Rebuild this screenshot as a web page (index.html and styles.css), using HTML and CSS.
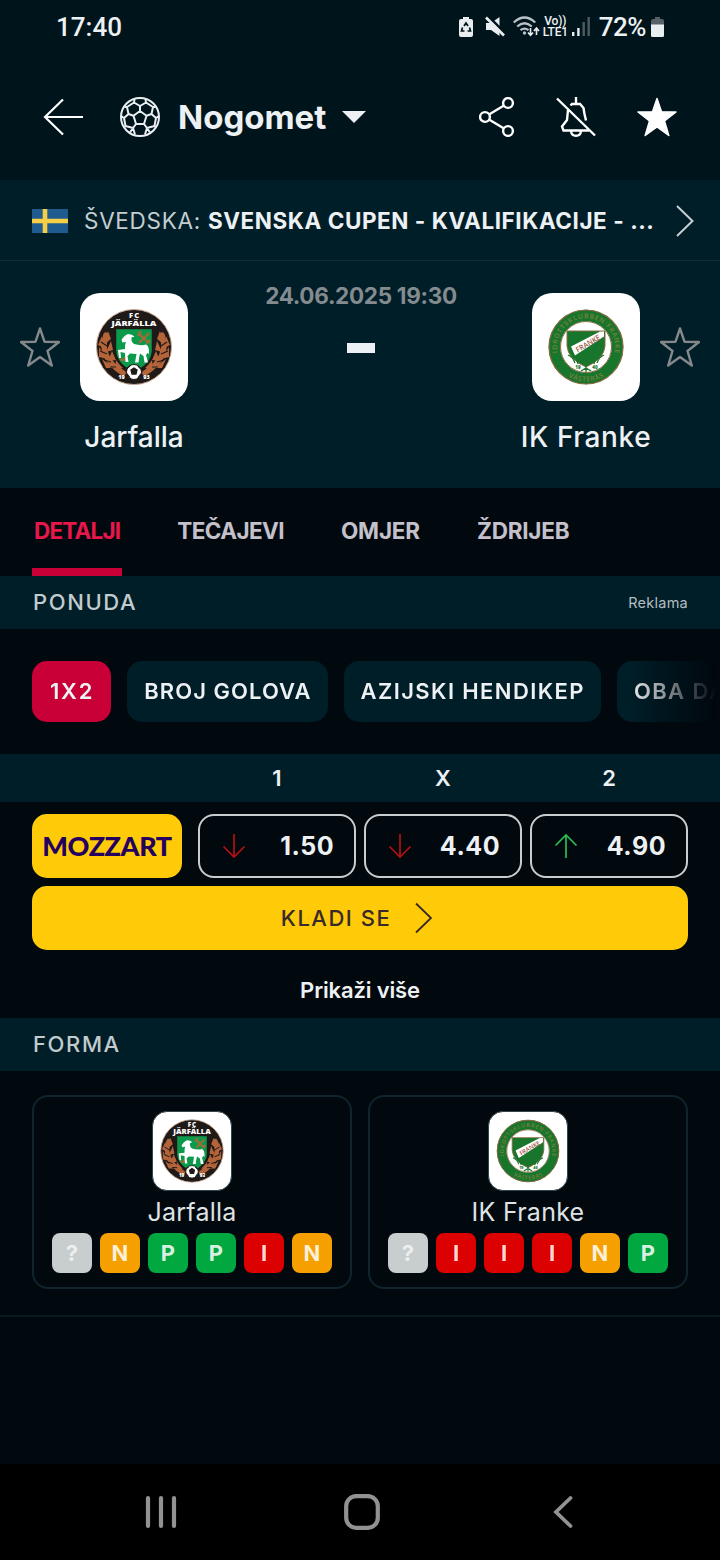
FILE: index.html
```html
<!DOCTYPE html>
<html lang="hr">
<head>
  <meta charset="UTF-8">
  <meta name="viewport" content="width=device-width, initial-scale=1.0">
  <title>Jarfalla - IK Franke</title>
  <link rel="stylesheet" href="styles.css">
</head>
<body>
  <!-- Shared icons and team crests -->
  <svg class="defs" width="0" height="0">
    <symbol id="star" viewBox="0 0 40 40">
      <path d="M20 1.500 L24.500 14.700 L39 15 L27.500 24 L31.800 38.500 L20 30 L8.200 38.500 L12.500 24 L1 15 L15.500 14.700 Z" stroke-linejoin="round"/>
    </symbol>
    <symbol id="arrow" viewBox="0 0 24 26">
      <path d="M12 1 V24 M1.500 13.500 L12 24 L22.500 13.500" fill="none" stroke="currentColor" stroke-width="1.700"/>
    </symbol>
    <symbol id="jarfalla" viewBox="0 0 108 108">
      <circle cx="54" cy="54" r="37.500" fill="#1f1a18" stroke="#c9a891" stroke-width="1"/>
      <g fill="none" stroke="#b5643a" stroke-width="5.500" stroke-linecap="round">
        <path d="M26 42 Q18 64 43 80"/>
        <path d="M82 42 Q90 64 65 80"/>
      </g>
      <g fill="#b5643a">
        <path d="M28 38 l3 8 l-5 4z M22 43 l-4 9 l6 3z M31 48 l2 9 l-7 2z M19 54 l0 10 l8 2z M32 58 l4 9 l-8 1z M22 66 l4 9 l8 0z M36 67 l7 8 l-8 2z"/>
        <path d="M80 38 l-3 8 l5 4z M86 43 l4 9 l-6 3z M77 48 l-2 9 l7 2z M89 54 l0 10 l-8 2z M76 58 l-4 9 l8 1z M86 66 l-4 9 l-8 0z M72 67 l-7 8 l8 2z"/>
      </g>
      <path d="M21 49l6 4M20 58l7 3M24 67l7 2M30 74l6 0M87 49l-6 4M88 58l-7 3M84 67l-7 2M78 74l-6 0" stroke="#1f1a18" stroke-width="1.200"/>
      <path d="M35 35 H73 V58 Q72 72 54 80 Q36 72 35 58 Z" fill="#0b9a4b" stroke="#1f1a18" stroke-width="2.500"/>
      <path d="M58 40 l11 10 M69 40 l-10 10 M61 38 l-3 5 M67 51 l3 -4" stroke="#a06b35" stroke-width="2.300"/>
      <path d="M48 61 l-5 7 M43 66 l-3 1" stroke="#a06b35" stroke-width="2"/>
      <path d="M41.500 47 Q44 42.500 48 41 Q52 41 54.500 43.500 L51.500 44.500 Q51 49 54 51 Q61 53 66 51.500 Q69.500 53 69 61 L67.500 60 L66 62 L68 69.500 H64.500 L63.500 63 L60 60.500 L59 65 L58.500 69.500 H55 L56.500 61 L50 60.500 L47.500 63 L48.500 69 H45.500 L45 60 L40.500 59 L41 65 H39 L38 57 L45 56 Q44.500 52 46 49 L42.500 49.500 Z" fill="#fff"/>
      <circle cx="54" cy="79" r="7.500" fill="#fff" stroke="#1f1a18" stroke-width="1"/>
      <path d="M51 77 l3 -2 l3 2 l-1 4 h-4z M47 75 l3 -2 M58 73 l3 3 M47 81 l3 4 M58 85 l3 -4" fill="#1f1a18" stroke="#1f1a18" stroke-width="1.300"/>
      <g fill="#fff" class="crest-text">
        <text x="54" y="25" font-size="7.500" textLength="10">FC</text>
        <text x="54" y="33.200" font-size="7.500" textLength="45" lengthAdjust="spacingAndGlyphs">JÄRFÄLLA</text>
        <text x="41.500" y="85.500" font-size="5.500">19</text>
        <text x="66.500" y="85.500" font-size="5.500">93</text>
      </g>
    </symbol>
    <symbol id="franke" viewBox="0 0 108 108">
      <circle cx="54" cy="54" r="31.500" fill="#fff" stroke="#18752c" stroke-width="11.500"/>
      <circle cx="54" cy="54" r="37" fill="none" stroke="#8a6b43" stroke-width="1.200"/>
      <circle cx="54" cy="54" r="25.500" fill="none" stroke="#8a6b43" stroke-width="1"/>
      <path id="ring-top" d="M26.200 62.500 A29 29 0 1 1 81.800 62.500" fill="none"/>
      <path id="ring-bottom" d="M27 75.500 A34.500 34.500 0 0 0 81 75.500" fill="none"/>
      <g class="crest-ring">
        <text font-size="6.600"><textPath href="#ring-top" textLength="102" startOffset="3">IDROTTSKLUBBEN·FRANKE</textPath></text>
        <text font-size="6.600"><textPath href="#ring-bottom" textLength="37" startOffset="12.500">VÄSTERÅS</textPath></text>
      </g>
      <path d="M35 38 H73 V53 Q72 66 54 74 Q36 66 35 53 Z" fill="#18752c" stroke="#8a6b43" stroke-width="1"/>
      <path d="M39 53.500 L68 38.500 L72 38.500 V43.500 L43 62.500 Z" fill="#fff"/>
      <path d="M36 62 q5 2 7 8 M40 62 q5 4 6 9 M72 62 q-5 2 -7 8 M68 62 q-5 4 -6 9 M54 72 v7 M49 78 l5 -3 l5 3" fill="none" stroke="#18752c" stroke-width="1.300"/>
      <g class="crest-text">
        <text class="banner" x="56" y="53.200" font-size="7.500" textLength="27" lengthAdjust="spacingAndGlyphs" fill="#a05a45" transform="rotate(-31 56 50.500)">FRANKE</text>
        <text x="46" y="76" font-size="4.500" fill="#18752c">19</text>
        <text x="63" y="76" font-size="4.500" fill="#18752c">40</text>
      </g>
    </symbol>
  </svg>

  <div class="screen">
    <div class="status-bar">
      <span class="clock">17:40</span>
      <div class="status-icons">
        <svg width="14" height="22" viewBox="0 0 14 22">
          <path d="M4 1 H10 V3 H12 Q14 3 14 5 V19 Q14 21 12 21 H2 Q0 21 0 19 V5 Q0 3 2 3 H4 Z" fill="#e8edef"/>
          <path d="M5 10 L7 7 L9 10 M10.500 11.500 L11.500 15 H8.500 M5.500 15 H2.500 L3.500 11.500" fill="none" stroke="#00141c" stroke-width="1.700"/>
        </svg>
        <svg class="mute" width="20" height="22" viewBox="0 0 20 22">
          <path d="M1 7 H6 L14.500 1 V20 L6 14 H1 Z" fill="#e8edef"/>
          <path d="M3 0 L20 17" stroke="#00141c" stroke-width="2.600"/>
          <path d="M1 1.500 L19 19.500" stroke="#e8edef" stroke-width="2.600"/>
        </svg>
        <svg class="wifi" width="27" height="22" viewBox="0 0 27 22">
          <g fill="none" stroke="#b9c2c6" stroke-width="2.300">
            <path d="M.8 6.500 Q11.500 -3.500 22.200 6.500"/>
            <path d="M4.200 10.500 Q11.500 4 18.800 10.500"/>
            <path d="M7.500 14.200 Q11.500 11 15.500 14.200"/>
          </g>
          <circle cx="11.500" cy="17" r="1.700" fill="#b9c2c6"/>
          <path d="M17.500 12 V19 M15 16.500 L17.500 19.300 L20 16.500 M23.500 19 V12 M21 15 L23.500 12 L26 15" fill="none" stroke="#e8edef" stroke-width="1.600"/>
        </svg>
        <div class="volte"><span>Vo))</span><span>LTE1</span></div>
        <svg class="signal" width="18" height="20" viewBox="0 0 18 20">
          <path d="M1.200 19 V15 M6.400 19 V11" stroke="#e8edef" stroke-width="2.400"/>
          <path d="M11.700 19 V5 M16.700 19 V0" stroke="#4d5a60" stroke-width="2.400"/>
        </svg>
        <span class="battery-level">72%</span>
        <svg width="13" height="22" viewBox="0 0 13 22">
          <path d="M4 1 H9 V3 H11 Q13 3 13 5 V9 H0 V5 Q0 3 2 3 H4 Z" fill="#566268"/>
          <path d="M0 8.500 H13 V19.500 Q13 21 11.500 21 H1.500 Q0 21 0 19.500 Z" fill="#e8edef"/>
        </svg>
      </div>
    </div>

    <header class="header">
      <svg class="back" width="42" height="40" viewBox="0 0 42 40">
        <path d="M40 20 H2 M20 2.500 L2 20 L20 37.500" fill="none" stroke="#fff" stroke-width="2.200"/>
      </svg>
      <svg class="ball" width="40" height="40" viewBox="0 0 40 40" fill="none" stroke="#e9eef0" stroke-width="2" stroke-linejoin="round">
        <circle cx="20" cy="20" r="19"/>
        <path d="M20 14 L26.500 18.700 L24 27 H16 L13.500 18.700 Z M20 14 V9 M26.500 18.700 L31.500 17 M24 27 L27 31 M16 27 L13 31 M13.500 18.700 L8.500 17"/>
        <path d="M20 9 L14 5.500 L14.500 2 M20 9 L26 5.500 L25.500 2 M14 5.500 L7 10 L8.500 17 L4 21 L5.500 29 L13 31 L15 37.500 M26 5.500 L33 10 L31.500 17 L36 21 L34.500 29 L27 31 L25 37.500 M7 10 L4.500 10 M33 10 L35.500 10 M4 21 L1 19 M36 21 L39 19 M5.500 29 L4.500 30 M34.500 29 L35.500 30 M13 31 L10 35.500 M27 31 L30 35.500"/>
      </svg>
      <h1>Nogomet</h1>
      <span class="caret"></span>
      <div class="actions">
        <svg width="36" height="40" viewBox="0 0 36 40" fill="none" stroke="#fff" stroke-width="2.400">
          <circle cx="6" cy="20" r="4.900"/>
          <circle cx="29" cy="6" r="4.900"/>
          <circle cx="29" cy="34" r="4.900"/>
          <path d="M10 17.500 L25 8.500 M10 22.500 L25 31.500"/>
        </svg>
        <svg width="40" height="40" viewBox="0 0 40 40" fill="none" stroke="#fff" stroke-width="2.400">
          <path d="M1 1.500 L39 38.500 M20 0 V7 M14.500 8.500 L16 7 H24 L27.500 11 L28.500 17 L30 23.500 M12 13 Q11.500 18 11 23 L6 29.500 L7.500 33.500 H33 M15 34 Q15.500 38.800 20 38.800 Q24.500 38.800 25 34"/>
        </svg>
        <svg class="star-full" width="40" height="40"><use href="#star"/></svg>
      </div>
    </header>

    <div class="league">
      <svg width="36" height="24" viewBox="0 0 36 24">
        <rect width="36" height="24" fill="#1f5b8f"/>
        <path d="M13 0 V24 M0 12 H36" stroke="#f7cf46" stroke-width="4.600"/>
      </svg>
      <p><span class="country">ŠVEDSKA: </span><span class="cup">SVENSKA CUPEN - KVALIFIKACIJE - ...</span></p>
      <svg class="league-next" width="18" height="32" viewBox="0 0 18 32">
        <path d="M1 1 L16.500 16 L1 31" fill="none" stroke="#c8cfd2" stroke-width="2"/>
      </svg>
    </div>

    <div class="match">
      <svg class="star-empty" width="40" height="40"><use href="#star"/></svg>
      <div class="team">
        <div class="team-logo"><svg width="108" height="108"><use href="#jarfalla"/></svg></div>
        <span class="team-name home">Jarfalla</span>
      </div>
      <div class="score">
        <span class="date">24.06.2025 19:30</span>
        <span class="dash"></span>
      </div>
      <div class="team">
        <div class="team-logo"><svg width="108" height="108"><use href="#franke"/></svg></div>
        <span class="team-name away">IK Franke</span>
      </div>
      <svg class="star-empty" width="40" height="40"><use href="#star"/></svg>
    </div>

    <nav class="tabs">
      <span class="tab active">DETALJI</span>
      <span class="tab odds">TEČAJEVI</span>
      <span class="tab">OMJER</span>
      <span class="tab">ŽDRIJEB</span>
    </nav>

    <div class="section-title"><h2>PONUDA</h2><span class="ad-label">Reklama</span></div>

    <div class="markets">
      <span class="chip selected">1X2</span>
      <span class="chip goals">BROJ GOLOVA</span>
      <span class="chip">AZIJSKI HENDIKEP</span>
      <span class="chip">OBA DAJU GOL</span>
    </div>

    <div class="odds-head"><span>1</span><span>X</span><span>2</span></div>

    <div class="offer">
      <div class="odds-row">
        <div class="bookmaker">MOZZART</div>
        <div class="odd down"><svg width="24" height="26"><use href="#arrow"/></svg><span>1.50</span></div>
        <div class="odd down"><svg width="24" height="26"><use href="#arrow"/></svg><span>4.40</span></div>
        <div class="odd up"><svg width="24" height="26"><use href="#arrow"/></svg><span>4.90</span></div>
      </div>
      <div class="bet-btn">
        <span>KLADI SE</span>
        <svg width="18" height="32" viewBox="0 0 18 32">
          <path d="M1 1.500 L16 16 L1 30.500" fill="none" stroke="#38292a" stroke-width="1.800"/>
        </svg>
      </div>
      <div class="more">Prikaži više</div>
    </div>

    <div class="section-title"><h2>FORMA</h2></div>

    <div class="form">
      <div class="form-card">
        <div class="form-logo"><svg width="90" height="90"><use href="#jarfalla"/></svg></div>
        <span class="form-name">Jarfalla</span>
        <div class="results">
          <span class="result unknown">?</span>
          <span class="result draw">N</span>
          <span class="result win">P</span>
          <span class="result win">P</span>
          <span class="result loss">I</span>
          <span class="result draw">N</span>
        </div>
      </div>
      <div class="form-card">
        <div class="form-logo"><svg width="90" height="90"><use href="#franke"/></svg></div>
        <span class="form-name">IK Franke</span>
        <div class="results">
          <span class="result unknown">?</span>
          <span class="result loss">I</span>
          <span class="result loss">I</span>
          <span class="result loss">I</span>
          <span class="result draw">N</span>
          <span class="result win">P</span>
        </div>
      </div>
    </div>

    <div class="system-nav">
      <svg width="32" height="34" viewBox="0 0 32 34">
        <path d="M3 3 V31 M16 3 V31 M29 3 V31" stroke="#929292" stroke-width="4.200" stroke-linecap="round"/>
      </svg>
      <svg class="nav-home" width="36" height="36" viewBox="0 0 36 36">
        <rect x="2.200" y="2.200" width="31.600" height="31.600" rx="10" fill="none" stroke="#929292" stroke-width="4.200"/>
      </svg>
      <svg class="nav-back" width="20" height="34" viewBox="0 0 20 34">
        <path d="M17.500 3 L3 17 L17.500 31" fill="none" stroke="#929292" stroke-width="3.800" stroke-linecap="round"/>
      </svg>
    </div>
  </div>
</body>
</html>
```

FILE: styles.css
```css
* {
  box-sizing: border-box;
}
body {
  margin: 0;
  background-color: #01080e;
  color: #edf1f3;
  font-family: Inter, "Liberation Sans", sans-serif;
}
h1, h2, p {
  margin: 0;
}
svg {
  display: block;
  flex-shrink: 0;
}
.defs {
  position: absolute;
}
.screen {
  width: 720px;
  height: 1560px;
  display: flex;
  flex-direction: column;
  overflow: hidden;
  white-space: nowrap;
}

/* Status bar */
.status-bar {
  height: 56px;
  padding: 0 56px 2px;
  display: flex;
  align-items: center;
  justify-content: space-between;
  background-color: #00141c;
  font-family: Roboto, sans-serif;
  font-size: 26px;
  font-weight: 500;
}
.status-icons {
  display: flex;
  align-items: center;
}
.mute {
  margin-left: 12px;
}
.wifi {
  margin-left: 8px;
}
.volte {
  display: flex;
  flex-direction: column;
  align-items: center;
  width: 27px;
  margin-left: 2px;
  font-size: 12px;
  line-height: 11px;
  letter-spacing: -0.2px;
}
.signal {
  margin-left: 3px;
}
.battery-level {
  margin: 0 5px 0 9px;
  letter-spacing: -0.5px;
}

/* Header */
.header {
  height: 124px;
  padding: 0 43px 2px;
  display: flex;
  align-items: center;
  background-color: #00141c;
}
.ball {
  margin-left: 35px;
}
.header h1 {
  margin-left: 18px;
  font-size: 33px;
  font-weight: 700;
}
.caret {
  margin-left: 16px;
  border-left: 12px solid transparent;
  border-right: 12px solid transparent;
  border-top: 12px solid #edf1f3;
}
.actions {
  display: flex;
  gap: 41px;
  margin-left: auto;
}
.star-full {
  fill: #fff;
  stroke: #fff;
  stroke-width: 1.5px;
}
.star-empty {
  fill: none;
  stroke: #85898b;
  stroke-width: 2.4px;
}

/* League */
.league {
  height: 81px;
  padding: 1px 26px 0 32px;
  display: flex;
  align-items: center;
  background-color: #001e28;
  border-bottom: 1px solid #0e2c36;
}
.league p {
  margin-left: 16px;
  font-size: 22.5px;
  white-space: pre;
}
.country {
  color: #c4ced1;
  letter-spacing: 0.7px;
}
.cup {
  font-weight: 700;
  letter-spacing: 0.55px;
}
.league-next {
  margin-left: auto;
}

/* Match */
.match {
  height: 227px;
  padding: 32px 20px 0;
  display: flex;
  gap: 20px;
  background-color: #001e28;
}
.match .star-empty {
  margin-top: 34px;
}
.team {
  width: 108px;
  display: flex;
  flex-direction: column;
  align-items: center;
}
.team-logo {
  border-radius: 20px;
  background-color: #fff;
}
.team-name {
  margin-top: 18px;
  font-size: 28px;
  line-height: 36px;
  font-weight: 500;
}
.away {
  letter-spacing: 0.6px;
}
.score {
  flex: 1;
  padding-left: 2px;
  display: flex;
  flex-direction: column;
  align-items: center;
}
.date {
  height: 50px;
  margin-top: -12px;
  line-height: 29px;
  font-size: 22.5px;
  font-weight: 700;
  letter-spacing: -0.3px;
  color: #848b8e;
}
.dash {
  width: 28px;
  height: 10px;
  margin-top: 12px;
  background-color: #edf1f3;
}

/* Tabs */
.tabs {
  height: 88px;
  padding: 0 32px;
  display: flex;
  gap: 53px;
}
.tab {
  padding: 0 2px;
  line-height: 86px;
  font-size: 22.5px;
  font-weight: 700;
  letter-spacing: -0.2px;
  color: #c4c1cb;
}
.tab.odds {
  letter-spacing: -0.6px;
}
.tab.active {
  letter-spacing: -0.8px;
  color: #e6174b;
  background: linear-gradient(#c80037, #c80037) bottom / 100% 8px no-repeat;
}

.section-title {
  height: 53px;
  padding: 0 32px 1px 33px;
  display: flex;
  align-items: center;
  justify-content: space-between;
  background-color: #001e28;
}
.section-title h2 {
  font-size: 22px;
  font-weight: 550;
  letter-spacing: 1.6px;
  color: #c2cbcd;
}
.ad-label {
  padding-top: 1px;
  font-size: 14.5px;
  letter-spacing: 0.25px;
  color: #b3bdc0;
}

/* Betting offer */
.markets {
  height: 125px;
  padding: 32px 0 0 32px;
  display: flex;
  gap: 16px;
  overflow: hidden;
  mask-image: linear-gradient(to right, #000 630px, transparent 716px);
}
.chip {
  height: 61px;
  padding: 0 16px 0 17px;
  border-radius: 15px;
  line-height: 61px;
  font-size: 22px;
  font-weight: 600;
  letter-spacing: 1.4px;
  background-color: #001e28;
}
.chip.goals {
  letter-spacing: 1.05px;
}
.chip.selected {
  padding: 0 17px 0 18px;
  letter-spacing: 1.8px;
  background-color: #c80037;
}
.odds-head {
  height: 48px;
  padding: 0 32px 0 198px;
  display: grid;
  grid-template-columns: repeat(3, 1fr);
  gap: 8px;
  line-height: 49px;
  font-size: 22px;
  font-weight: 600;
  text-align: center;
  background-color: #001e28;
}
.offer {
  height: 216px;
  padding: 12px 32px 0;
}
.odds-row {
  display: flex;
  gap: 8px;
}
.bookmaker {
  width: 150px;
  height: 64px;
  margin-right: 8px;
  border-radius: 15px;
  line-height: 64px;
  text-align: center;
  font-family: Lato, sans-serif;
  font-size: 27px;
  font-weight: 900;
  letter-spacing: -0.4px;
  color: #25005e;
  background-color: #ffcb08;
}
.odd {
  width: 158px;
  height: 64px;
  padding: 0 20px 0 22px;
  display: flex;
  align-items: center;
  justify-content: space-between;
  border: 2px solid #c8cdd0;
  border-radius: 16px;
  font-size: 25px;
  font-weight: 700;
  letter-spacing: 0.5px;
}
.down svg {
  color: #b50f12;
}
.up svg {
  color: #28bd55;
  transform: rotate(180deg);
}
.bet-btn {
  height: 64px;
  margin-top: 8px;
  padding-right: 6px;
  display: flex;
  align-items: center;
  justify-content: center;
  gap: 24px;
  border-radius: 15px;
  font-size: 22px;
  font-weight: 500;
  letter-spacing: 1.5px;
  color: #38292a;
  background-color: #ffcb08;
}
.more {
  line-height: 80px;
  text-align: center;
  font-size: 22px;
  font-weight: 600;
  letter-spacing: -0.15px;
}

/* Form */
.form {
  height: 246px;
  padding: 24px 32px 0;
  display: flex;
  gap: 16px;
  border-bottom: 2px solid #07181f;
}
.form-card {
  width: 320px;
  height: 194px;
  padding-top: 14px;
  display: flex;
  flex-direction: column;
  align-items: center;
  border: 2px solid #0e252e;
  border-radius: 16px;
}
.form-logo {
  width: 80px;
  height: 80px;
  display: flex;
  align-items: center;
  justify-content: center;
  border: 1px solid #33464e;
  border-radius: 15px;
  overflow: hidden;
  background-color: #fff;
}
.form-name {
  line-height: 42px;
  font-size: 25px;
  letter-spacing: 0.25px;
  color: #dfe3e5;
}
.results {
  display: flex;
  gap: 8px;
}
.result {
  width: 40px;
  height: 40px;
  border-radius: 8px;
  line-height: 40px;
  text-align: center;
  font-size: 22px;
  font-weight: 700;
  color: rgba(255, 255, 255, 0.85);
}
.unknown {
  color: rgba(255, 255, 255, 0.7);
  background-color: #c8cdcd;
}
.draw {
  background-color: #f5a000;
}
.win {
  background-color: #00a83f;
}
.loss {
  background-color: #dc0000;
}

/* Crest lettering */
.crest-text {
  font-family: "Open Sans", sans-serif;
  font-weight: 800;
  text-anchor: middle;
}
.banner {
  font-weight: 600;
}
.crest-ring {
  font-family: "Open Sans", sans-serif;
  font-weight: 600;
  fill: #7f803f;
}

.system-nav {
  height: 96px;
  margin-top: auto;
  padding-left: 145px;
  display: flex;
  align-items: center;
  background-color: #000;
}
.nav-home {
  margin-left: 167px;
}
.nav-back {
  margin-left: 173px;
}
```
